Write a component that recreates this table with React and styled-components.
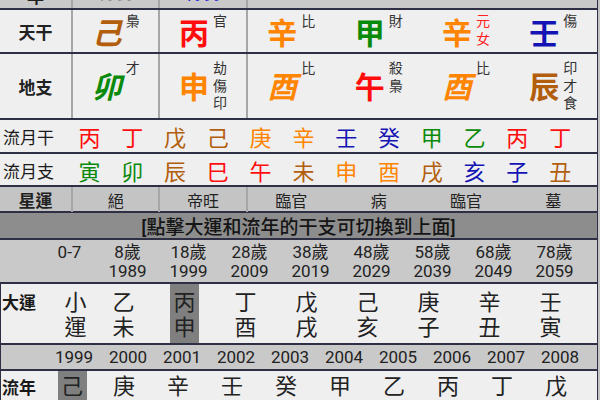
import React from "react";
import styled, { createGlobalStyle } from "styled-components";

const LINE = "#2e2e44";
const DIV = "#a6a6a6";

const COLOR = {
  wood: "#0a8a0a",
  fire: "#ff0d0d",
  earth: "#b25e0c",
  metal: "#ff8400",
  water: "#1414b4",
};

const GlobalStyle = createGlobalStyle`
  body {
    margin: 0;
    background: #c4c4c4;
    font-family: Roboto, "Noto Sans CJK TC", sans-serif;
    overflow: hidden;
  }
`;

const Sheet = styled.div`
  width: 597px;
  height: 400px;
  overflow: hidden;
  border-right: 1px solid ${LINE};
  background: #efefef;
  color: #222;
`;

const Row = styled.div`
  display: grid;
  grid-template-columns: ${(p) => p.$cols};
  height: ${(p) => p.$h}px;
  margin-top: ${(p) => p.$mt || 0}px;
  background: ${(p) => p.$bg || "#efefef"};
  border-bottom: 2px solid ${LINE};
  border-left: ${(p) => (p.$edge ? `1px solid ${LINE}` : "none")};
`;

const Cell = styled.div`
  display: flex;
  align-items: center;
  justify-content: center;
  border-right: ${(p) => (p.$div ? `2px solid ${DIV}` : "none")};
  font-size: ${(p) => p.$size || 17}px;
  font-weight: ${(p) => (p.$bold ? 700 : 400)};
  color: ${(p) => p.$color || "#222"};
  white-space: nowrap;
`;

const Glyph = styled.span`
  font-size: 30px;
  line-height: 1;
  font-weight: 700;
  font-style: ${(p) => (p.$italic ? "italic" : "normal")};
  color: ${(p) => p.$color};
  margin-top: ${(p) => p.$dy}px;
`;

const Notes = styled.span`
  align-self: flex-start;
  display: flex;
  flex-direction: column;
  margin-top: ${(p) => p.$top}px;
  margin-left: 4px;
  font-size: 14px;
  line-height: 17.5px;
  color: ${(p) => p.$color || "#333"};
`;

const Label = styled.div`
  padding: ${(p) => p.$pad || "0 0 0 3px"};
  display: flex;
  align-items: ${(p) => (p.$top ? "flex-start" : "center")};
  font-size: 17px;
  font-weight: ${(p) => (p.$bold ? 700 : 400)};
  color: #1a1a1a;
  white-space: nowrap;
`;

const MonthChar = styled.div`
  display: flex;
  align-items: center;
  justify-content: center;
  font-size: 22px;
  color: ${(p) => p.$color};
`;

const Banner = styled.div`
  height: 25px;
  display: flex;
  align-items: center;
  justify-content: center;
  background: #8d8d8d;
  border-bottom: 2px solid ${LINE};
  font-size: 19px;
  font-weight: 500;
  color: #151515;
`;

const AgeCell = styled.div`
  display: flex;
  flex-direction: column;
  align-items: center;
  padding-top: 3px;
  font-size: 17px;
  line-height: 19px;
  color: #222;

  span {
    height: 19px;
  }
`;

const LuckCell = styled.div`
  justify-self: center;
  width: 29px;
  display: flex;
  flex-direction: column;
  align-items: center;
  padding-top: ${(p) => p.$pt}px;
  background: ${(p) => (p.$active ? "#7f7f7f" : "transparent")};
  font-size: 22px;
  line-height: 25px;
  color: #222;
`;

const YearCell = styled.div`
  display: flex;
  align-items: center;
  justify-content: center;
  font-size: 17px;
  color: #222;
`;

const TOP_COLS = "73px repeat(6, 87.33px)";

const stems = [
  { c: "己", color: COLOR.earth, italic: true, notes: ["梟"] },
  { c: "丙", color: COLOR.fire, notes: ["官"] },
  { c: "辛", color: COLOR.metal, notes: ["比"] },
  { c: "甲", color: COLOR.wood, notes: ["財"] },
  { c: "辛", color: COLOR.metal, notes: ["元", "女"], noteColor: "#f22" },
  { c: "壬", color: COLOR.water, notes: ["傷"] },
];

const branches = [
  { c: "卯", color: COLOR.wood, italic: true, notes: ["才"] },
  { c: "申", color: COLOR.metal, notes: ["劫", "傷", "印"] },
  { c: "酉", color: COLOR.metal, italic: true, notes: ["比"] },
  { c: "午", color: COLOR.fire, notes: ["殺", "梟"] },
  { c: "酉", color: COLOR.metal, italic: true, notes: ["比"] },
  { c: "辰", color: COLOR.earth, notes: ["印", "才", "食"] },
];

const monthStems = [
  ["丙", "fire"], ["丁", "fire"], ["戊", "earth"], ["己", "earth"],
  ["庚", "metal"], ["辛", "metal"], ["壬", "water"], ["癸", "water"],
  ["甲", "wood"], ["乙", "wood"], ["丙", "fire"], ["丁", "fire"],
];

const monthBranches = [
  ["寅", "wood"], ["卯", "wood"], ["辰", "earth"], ["巳", "fire"],
  ["午", "fire"], ["未", "earth"], ["申", "metal"], ["酉", "metal"],
  ["戌", "earth"], ["亥", "water"], ["子", "water"], ["丑", "earth"],
];

const stars = ["絕", "帝旺", "臨官", "病", "臨官", "墓"];

const ages = [
  ["0-7"],
  ["8歲", "1989"], ["18歲", "1999"], ["28歲", "2009"], ["38歲", "2019"],
  ["48歲", "2029"], ["58歲", "2039"], ["68歲", "2049"], ["78歲", "2059"],
];

const luck = [
  ["小", "運"], ["乙", "未"], ["丙", "申"], ["丁", "酉"], ["戊", "戌"],
  ["己", "亥"], ["庚", "子"], ["辛", "丑"], ["壬", "寅"],
];

const years = [1999, 2000, 2001, 2002, 2003, 2004, 2005, 2006, 2007, 2008];
const yearStems = ["己", "庚", "辛", "壬", "癸", "甲", "乙", "丙", "丁", "戊"];

const PillarRow = ({ label, items, h, noteTop, dy }) => (
  <Row $cols={TOP_COLS} $h={h}>
    <Cell $div $bold>{label}</Cell>
    {items.map((it, i) => (
      <Cell key={i} $div={i < 2}>
        <Glyph $color={it.color} $italic={it.italic} $dy={dy}>
          {it.c}
        </Glyph>
        <Notes $top={noteTop} $color={it.noteColor}>
          {it.notes.map((n, j) => (
            <span key={j}>{n}</span>
          ))}
        </Notes>
      </Cell>
    ))}
  </Row>
);

const MonthRow = ({ label, items, h }) => (
  <Row $cols="68px repeat(12, 42.8px)" $h={h}>
    <Label>{label}</Label>
    {items.map(([c, el], i) => (
      <MonthChar key={i} $color={COLOR[el]}>
        {c}
      </MonthChar>
    ))}
  </Row>
);

export default function App() {
  return (
    <>
      <GlobalStyle />
      <Sheet>
        <Row $cols={TOP_COLS} $h={26} $mt={-18} $bg="#c9c9c9">
          <Cell $div $bold>年</Cell>
          <Cell $div $color="#8a8a8a">1999</Cell>
          <Cell $div $color="#1a1ae0">1999</Cell>
        </Row>

        <PillarRow label="天干" items={stems} h={42} noteTop={3} dy={6} />
        <PillarRow label="地支" items={branches} h={64} noteTop={6} dy={3} />

        <MonthRow label="流月干" items={monthStems} h={32} />
        <MonthRow label="流月支" items={monthBranches} h={31} />

        <Row $cols={TOP_COLS} $h={24} $bg="#c4c4c4">
          <Cell $div $bold>星運</Cell>
          {stars.map((s, i) => (
            <Cell key={i} $div={i < 2} $size={16}>
              {s}
            </Cell>
          ))}
        </Row>

        <Banner>[點擊大運和流年的干支可切換到上面]</Banner>

        <Row $cols="42px 55px repeat(8, 61px)" $h={42} $bg="#c9c9c9">
          <div />
          {ages.map((a, i) => (
            <AgeCell key={i}>
              {a.map((t, j) => (
                <span key={j}>{t}</span>
              ))}
            </AgeCell>
          ))}
        </Row>

        <Row $cols="57px 35px repeat(8, 61px)" $h={59} $edge>
          <Label $top $bold $pad="5px 0 0 1px">大運</Label>
          {luck.map(([a, b], i) => (
            <LuckCell key={i} $active={i === 2} $pt={6}>
              <span>{a}</span>
              <span>{b}</span>
            </LuckCell>
          ))}
        </Row>

        <Row $cols="46px repeat(10, 54px)" $h={24} $bg="#c9c9c9" $edge>
          <div />
          {years.map((y) => (
            <YearCell key={y}>{y}</YearCell>
          ))}
        </Row>

        <Row $cols="46px 50px repeat(9, 54px)" $h={40} $edge>
          <Label $top $bold $pad="3px 0 0 1px">流年</Label>
          {yearStems.map((c, i) => (
            <LuckCell key={i} $active={i === 0} $pt={3}>
              <span>{c}</span>
            </LuckCell>
          ))}
        </Row>
      </Sheet>
    </>
  );
}
